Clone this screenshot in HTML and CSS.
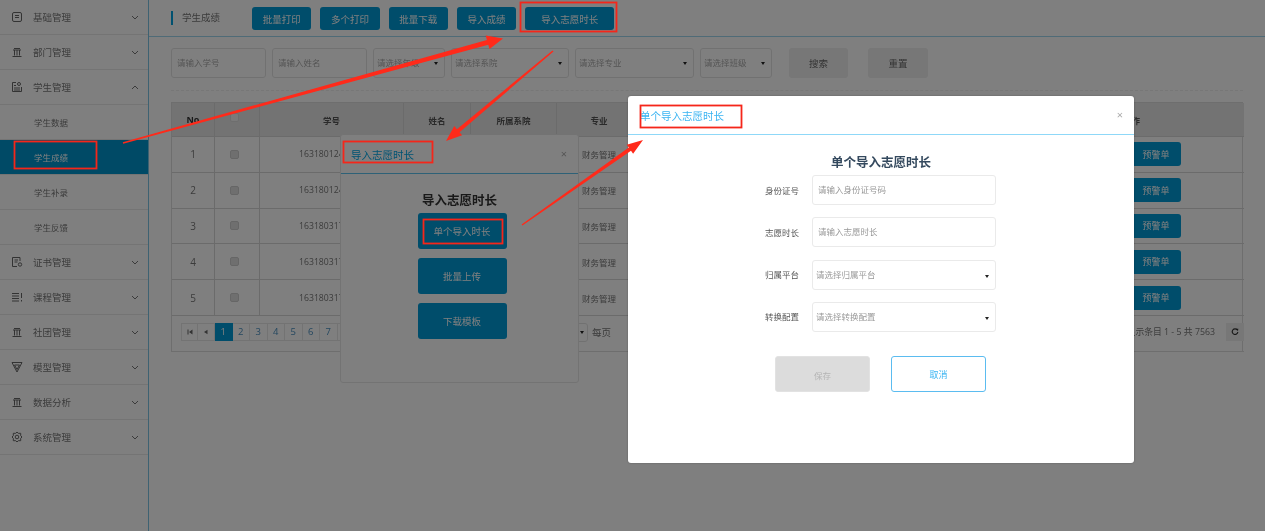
FILE: index.html
```html
<!DOCTYPE html>
<html lang="zh-CN">
<head>
<meta charset="utf-8">
<title>学生成绩</title>
<link rel="stylesheet" href="styles.css">
</head>
<body>
<div class="app">
  <aside class="sidebar">
    <div class="nav-row"><svg class="ico" viewBox="0 0 12 12"><rect x="1.500" y="1.500" width="9" height="9" rx="1.500"/><path d="M4 4.500h4M4 6.500h4"/></svg><span>基础管理</span><svg class="chev" viewBox="0 0 8 5"><path d="M1 1l3 3 3-3"/></svg></div>
    <div class="nav-row"><svg class="ico" viewBox="0 0 12 12"><path d="M3 2.500h6M2 4h8M3.500 4v5.500M6 4v5.500M8.500 4v5.500M1.500 10.500h9"/></svg><span>部门管理</span><svg class="chev" viewBox="0 0 8 5"><path d="M1 1l3 3 3-3"/></svg></div>
    <div class="nav-row"><svg class="ico" viewBox="0 0 12 12"><path d="M5 1.500H1.500v9h9V6M3 4.500h2M3 7h6M3 9h6"/><circle cx="8" cy="3" r="1.500"/></svg><span>学生管理</span><svg class="chev" viewBox="0 0 8 5"><path d="M1 4l3-3 3 3"/></svg></div>
    <div class="sub-row">学生数据</div>
    <div class="sub-row active">学生成绩</div>
    <div class="sub-row">学生补录</div>
    <div class="sub-row">学生反馈</div>
    <div class="nav-row"><svg class="ico" viewBox="0 0 12 12"><path d="M9 5V1.500H1.500v9H6M3.500 4h3.500M3.500 6h3"/><circle cx="9" cy="8.500" r="1.700"/></svg><span>证书管理</span><svg class="chev" viewBox="0 0 8 5"><path d="M1 1l3 3 3-3"/></svg></div>
    <div class="nav-row"><svg class="ico" viewBox="0 0 12 12"><path d="M1 2.500h7M1 5h7M1 7.500h7M1 10h7M10.500 2v5M10.500 9v1.500"/></svg><span>课程管理</span><svg class="chev" viewBox="0 0 8 5"><path d="M1 1l3 3 3-3"/></svg></div>
    <div class="nav-row"><svg class="ico" viewBox="0 0 12 12"><path d="M3 2.500h6M2 4h8M3.500 4v5.500M6 4v5.500M8.500 4v5.500M1.500 10.500h9"/></svg><span>社团管理</span><svg class="chev" viewBox="0 0 8 5"><path d="M1 1l3 3 3-3"/></svg></div>
    <div class="nav-row"><svg class="ico" viewBox="0 0 12 12"><path d="M1 1.500h10L6 11zM3.500 4h5L6 8.500z"/></svg><span>模型管理</span><svg class="chev" viewBox="0 0 8 5"><path d="M1 1l3 3 3-3"/></svg></div>
    <div class="nav-row"><svg class="ico" viewBox="0 0 12 12"><path d="M3 2.500h6M2 4h8M3.500 4v5.500M6 4v5.500M8.500 4v5.500M1.500 10.500h9"/></svg><span>数据分析</span><svg class="chev" viewBox="0 0 8 5"><path d="M1 1l3 3 3-3"/></svg></div>
    <div class="nav-row"><svg class="ico" viewBox="0 0 12 12"><circle cx="6" cy="6" r="1.800"/><path d="M6 1l1.300 1.300h2.400v2.400L11 6 9.700 7.300v2.400H7.300L6 11 4.700 9.700H2.300V7.300L1 6l1.300-1.300V2.300h2.400z"/></svg><span>系统管理</span><svg class="chev" viewBox="0 0 8 5"><path d="M1 1l3 3 3-3"/></svg></div>
  </aside>

  <main class="main">
    <header class="topbar">
      <div class="page-title">学生成绩</div>
      <div class="top-actions">
        <button class="btn btn-top">批量打印</button>
        <button class="btn btn-top">多个打印</button>
        <button class="btn btn-top">批量下载</button>
        <button class="btn btn-top">导入成绩</button>
        <button class="btn btn-top btn-wide">导入志愿时长</button>
      </div>
    </header>

    <div class="content">
      <div class="filters">
        <div class="field w95">请输入学号</div>
        <div class="field w95">请输入姓名</div>
        <div class="field select w72">请选择年级</div>
        <div class="field select w118">请选择系院</div>
        <div class="field select w119">请选择专业</div>
        <div class="field select w72">请选择班级</div>
        <button class="btn-gray first">搜索</button>
        <button class="btn-gray">重置</button>
      </div>

      <div class="table">
        <div class="th">No</div><div class="th"><i class="check head"></i></div><div class="th">学号</div><div class="th">姓名</div><div class="th">所属系院</div><div class="th">专业</div><div class="th"></div><div class="th op">操作</div>

        <div class="td">1</div><div class="td"><i class="check"></i></div><div class="td num">163180124</div><div class="td"></div><div class="td"></div><div class="td">财务管理</div><div class="td"></div><div class="td op"><button class="btn btn-row">预警单</button></div>
        <div class="td">2</div><div class="td"><i class="check"></i></div><div class="td num">163180124</div><div class="td"></div><div class="td"></div><div class="td">财务管理</div><div class="td"></div><div class="td op"><button class="btn btn-row">预警单</button></div>
        <div class="td">3</div><div class="td"><i class="check"></i></div><div class="td num">163180317</div><div class="td"></div><div class="td"></div><div class="td">财务管理</div><div class="td"></div><div class="td op"><button class="btn btn-row">预警单</button></div>
        <div class="td">4</div><div class="td"><i class="check"></i></div><div class="td num">163180317</div><div class="td"></div><div class="td"></div><div class="td">财务管理</div><div class="td"></div><div class="td op"><button class="btn btn-row">预警单</button></div>
        <div class="td">5</div><div class="td"><i class="check"></i></div><div class="td num">163180317</div><div class="td"></div><div class="td"></div><div class="td">财务管理</div><div class="td"></div><div class="td op"><button class="btn btn-row">预警单</button></div>

        <div class="tfoot">
          <div class="pager">
            <span class="pg tool">
              <svg viewBox="0 0 6 6"><path d="M0.500 0.500v5h1v-5zM5.500 0.500v5L2 3z"/></svg>
            </span>
            <span class="pg tool">
              <svg viewBox="0 0 6 6"><path d="M4.500 0.800v4.400L1 3z"/></svg>
            </span>
            <span class="pg on">1</span><span class="pg">2</span><span class="pg">3</span><span class="pg">4</span><span class="pg">5</span><span class="pg">6</span><span class="pg">7</span><span class="pg">8</span>
          </div>
          <div class="per-page"><span class="per-select"></span><span>每页</span></div>
          <div class="count">显示条目 1 - 5 共 7563</div>
          <div class="refresh"><svg viewBox="0 0 10 10"><path d="M7.800 2.500A3.500 3.500 0 1 0 8.500 5"/><path class="fill" d="M6.200 0.800l3 0.200-0.500 3z"/></svg></div>
        </div>
      </div>
    </div>
  </main>
</div>

<section class="dialog dialog-a">
  <div class="dialog-head"><span>导入志愿时长</span><b class="close">×</b></div>
  <h2 class="dialog-title">导入志愿时长</h2>
  <div class="stack">
    <button class="btn btn-big">单个导入时长</button>
    <button class="btn btn-big">批量上传</button>
    <button class="btn btn-big">下载模板</button>
  </div>
</section>

<div class="dim"></div>

<section class="dialog dialog-b">
  <div class="dialog-head"><span>单个导入志愿时长</span><b class="close">×</b></div>
  <h2 class="dialog-title">单个导入志愿时长</h2>
  <form class="form">
    <div class="form-row"><label>身份证号</label><div class="form-field">请输入身份证号码</div></div>
    <div class="form-row"><label>志愿时长</label><div class="form-field">请输入志愿时长</div></div>
    <div class="form-row"><label>归属平台</label><div class="form-field sel">请选择归属平台</div></div>
    <div class="form-row"><label>转换配置</label><div class="form-field sel">请选择转换配置</div></div>
  </form>
  <div class="form-actions">
    <button class="btn-save">保存</button>
    <button class="btn-cancel">取消</button>
  </div>
</section>

<svg class="marks" viewBox="0 0 1265 531" width="1265" height="531">
  <rect x="14.500" y="141.500" width="82" height="27"/>
  <rect x="520.500" y="2.500" width="96" height="29"/>
  <rect x="343.500" y="141.500" width="89" height="21"/>
  <rect x="423.500" y="219.500" width="79" height="24"/>
  <rect x="640.500" y="105.500" width="101" height="22"/>
  <polygon points="123.200,143.700 488.300,44.700 489.500,49 503,38.500 485.700,35.600 486.900,39.900 122.800,142.300"/>
  <polygon points="553.500,51.600 459.500,132.200 462.100,135.300 446,141 454.300,126.100 456.900,129.200 552.500,50.400"/>
  <polygon points="522.400,225.600 631,150.800 633.100,153.700 643,140 626.700,144.700 628.800,147.600 521.600,224.400"/>
</svg>
</body>
</html>
```
FILE: styles.css
```css
* { box-sizing: border-box; }
html, body { margin: 0; height: 531px; overflow: hidden; }
body {
  position: relative;
  width: 1265px;
  background: #fff;
  font-family: "Open Sans", "Noto Sans CJK SC", sans-serif;
  font-size: 9px;
  color: #777;
}
button { font: inherit; padding: 0; cursor: pointer; }

.app { display: flex; height: 531px; filter: blur(0.35px); }

/* sidebar */
.sidebar {
  width: 149px;
  flex: none;
  border-right: 1.500px solid #7cc4e4;
}
.nav-row, .sub-row {
  height: 35px;
  display: flex;
  align-items: center;
  border-bottom: 1px solid #e9e9e9;
}
.nav-row { padding: 0 9px 0 11px; font-size: 9.500px; }
.nav-row span { margin-left: 10px; flex: 1; }
.sub-row { padding-left: 34px; font-size: 8.500px; }
.sub-row.active { background: #0094cc; color: #fff; }
.ico {
  width: 12px;
  height: 12px;
  flex: none;
  fill: none;
  stroke: #666;
  stroke-width: 1;
}
.chev {
  width: 8px;
  height: 5px;
  flex: none;
  fill: none;
  stroke: #777;
  stroke-width: 1;
}

/* main */
.main { flex: 1; min-width: 0; }
.topbar {
  height: 37px;
  display: flex;
  align-items: center;
  padding: 1px 0 0 22px;
  border-bottom: 1px solid #9fd6ee;
}
.page-title {
  border-left: 2px solid #00a2e0;
  padding-left: 9px;
  margin-bottom: 2px;
  height: 14px;
  line-height: 14px;
  font-size: 9.500px;
  width: 81px;
}
.top-actions { display: flex; gap: 9px; }
.btn {
  background: #009ad6;
  border: 0;
  border-radius: 3px;
  color: #fff;
  font-size: 9.500px;
}
.btn-top { width: 59.300px; height: 23px; }
.btn-wide { width: 89px; }

.content { padding: 11px 22px 0; }
.filters {
  display: flex;
  gap: 6px;
  height: 43px;
  padding-bottom: 12px;
  border-bottom: 1px dashed #eee;
}
.field {
  position: relative;
  height: 30px;
  line-height: 28px;
  border: 1px solid #e3e3e3;
  border-radius: 3px;
  padding-left: 5px;
  color: #aaa;
  font-size: 8.500px;
  white-space: nowrap;
  overflow: hidden;
}
.field.select { padding-left: 3px; }
.select::after, .sel::after {
  content: "";
  position: absolute;
  right: 6px;
  top: 13px;
  border: 2.500px solid transparent;
  border-top: 3.500px solid #222;
  border-bottom: 0;
}
.w95 { width: 95px; }
.w72 { width: 72px; }
.w118 { width: 118px; }
.w119 { width: 119px; }
.btn-gray {
  width: 60px;
  height: 30px;
  margin-left: 14px;
  border: 0;
  border-radius: 3px;
  background: #eee;
  color: #666;
  font-size: 9.500px;
}
.btn-gray.first { margin-left: 11px; width: 59px; margin-right: 0; }

/* table */
.table {
  margin-top: 11px;
  display: grid;
  grid-template-columns: 43px 45px 144px 67px 86px 84px 460px 143px;
  grid-template-rows: 34px repeat(5, 35.800px) 36px;
  border: 1px solid #dcdcdc;
  border-bottom: 0;
  width: 1072px;
}
.th, .td {
  display: flex;
  align-items: center;
  justify-content: center;
  border-bottom: 1px solid #d6d6d6;
}
.th {
  background: #e6e6e6;
  font-weight: 700;
  color: #555;
  font-size: 8.500px;
}
.td { font-size: 8.500px; color: #777; }
.td.num { justify-content: flex-start; padding-left: 39px; font-size: 8.700px; }
.th:nth-child(-n+5), .td:nth-child(8n+1), .td:nth-child(8n+2), .td:nth-child(8n+3), .td:nth-child(8n+4) {
  border-right: 1px solid #d6d6d6;
}
.th:nth-child(1) { font-size: 9px; color: #333; }
.td:nth-child(8n+1) { font-size: 10px; }
.op { justify-content: flex-start; padding-left: 22px; }
.td.op { padding-left: 30px; }
.check {
  display: block;
  width: 9px;
  height: 9px;
  margin-right: 6px;
  border: 1px solid #ccc;
  border-radius: 2px;
  background: #dfdfdf;
}
.check.head { background: #f4f4f4; border-color: #ddd; margin-top: -4px; }
.btn-row { width: 50px; height: 24px; font-size: 9px; }

.tfoot {
  grid-column: 1 / -1;
  display: flex;
  align-items: flex-start;
  padding: 7px 0 0 9px;
  border-bottom: 1px solid #dcdcdc;
}
.pager {
  display: flex;
  width: 372px;
  height: 18px;
}
.pg {
  width: 17.500px;
  height: 18px;
  line-height: 16px;
  text-align: center;
  border: 1px solid #e6e6e6;
  border-left: 0;
  color: #4a8fbf;
  font-size: 9.500px;
}
.pg.tool { display: flex; align-items: center; justify-content: center; width: 17px; color: #555; }
.pg.tool:first-child { border-left: 1px solid #e6e6e6; }
.pg.tool svg { width: 6px; height: 6px; fill: #666; }
.pg.on { background: #009ad6; border-color: #009ad6; color: #fff; }
.per-page { display: flex; align-items: center; gap: 4px; font-size: 9.500px; }
.per-select {
  position: relative;
  width: 35px;
  height: 19px;
  border: 1px solid #e3e3e3;
  border-radius: 3px;
}
.per-select::after {
  content: "";
  position: absolute;
  right: 3px;
  top: 7px;
  border: 2.500px solid transparent;
  border-top: 3.500px solid #222;
  border-bottom: 0;
}
.count { margin-left: auto; margin-right: 11px; font-size: 8.800px; line-height: 18px; }
.refresh {
  width: 18px;
  height: 18px;
  background: #eee;
  display: flex;
  align-items: center;
  justify-content: center;
}
.refresh svg { width: 8px; height: 8px; fill: none; stroke: #333; stroke-width: 1.500; }
.refresh .fill { fill: #333; stroke: none; }

/* dialogs */
.dialog {
  position: absolute;
  background: #fff;
  border-radius: 3px;
  filter: blur(0.35px);
}
.dialog-head {
  display: flex;
  justify-content: space-between;
  align-items: center;
  border-bottom: 1px solid #8fd8f8;
}
.close { font-weight: 400; color: #aaa; font-size: 11px; line-height: 1; margin-top: -2px; }
.dialog-title { margin: 0; text-align: center; font-weight: 700; color: #34495e; }

.dialog-a {
  left: 340px;
  top: 134px;
  width: 239px;
  height: 249px;
  border: 1px solid #e6e6e6;
}
.dialog-a .dialog-head {
  height: 39px;
  padding: 0 11px 0 10px;
  color: #00a8e8;
  font-size: 10.500px;
  border-bottom-color: #5cc3ee;
}
.dialog-a .dialog-title { font-size: 12.500px; margin-top: 18px; line-height: 18px; color: #333; }
.stack {
  display: flex;
  flex-direction: column;
  align-items: center;
  gap: 9px;
  margin-top: 3px;
  padding-left: 5px;
}
.btn-big { width: 89px; height: 36px; font-size: 9.500px; }

.dim {
  position: absolute;
  inset: 0;
  background: rgba(0, 0, 0, 0.5);
}

.dialog-b {
  left: 628px;
  top: 96px;
  width: 506px;
  height: 367px;
  box-shadow: 0 0 2px rgba(0, 0, 0, 0.3);
}
.dialog-b .dialog-head {
  height: 39px;
  padding: 0 11px 0 12px;
  color: #3ab4f2;
  font-size: 10.500px;
}
.dialog-b .dialog-title { margin-top: 19px; font-size: 12.500px; line-height: 18px; }
.form { margin-top: 3px; }
.form-row { display: flex; align-items: center; margin-bottom: 12.300px; }
.form-row label {
  width: 171px;
  margin-bottom: 1px;
  text-align: right;
  font-size: 8.500px;
  color: #555;
}
.form-field {
  position: relative;
  margin-left: 13px;
  width: 184px;
  height: 30px;
  line-height: 28px;
  padding-left: 5px;
  border: 1px solid #eaeaea;
  border-radius: 3px;
  color: #999;
  font-size: 8.500px;
}
.sel { padding-left: 3px; }
.sel::after { top: 14px; right: 6px; }
.form-actions { display: flex; gap: 21px; margin-top: 24px; padding-left: 147px; }
.btn-save, .btn-cancel {
  width: 95px;
  height: 36px;
  padding-top: 2px;
  border-radius: 3px;
}
.btn-save { border: 1px solid #e2e2e2; background: #dcdcdc; color: #b5b5b5; font-size: 8.500px; }
.btn-cancel { border: 1px solid #5bbcf0; background: #fff; color: #3ab4f2; font-size: 9px; }

/* red annotations drawn over the capture */
.marks { position: absolute; left: 0; top: 0; }
.marks rect { fill: none; stroke: #f5261a; stroke-width: 1.800; }
.marks polygon { fill: #ff2a1a; }
```
